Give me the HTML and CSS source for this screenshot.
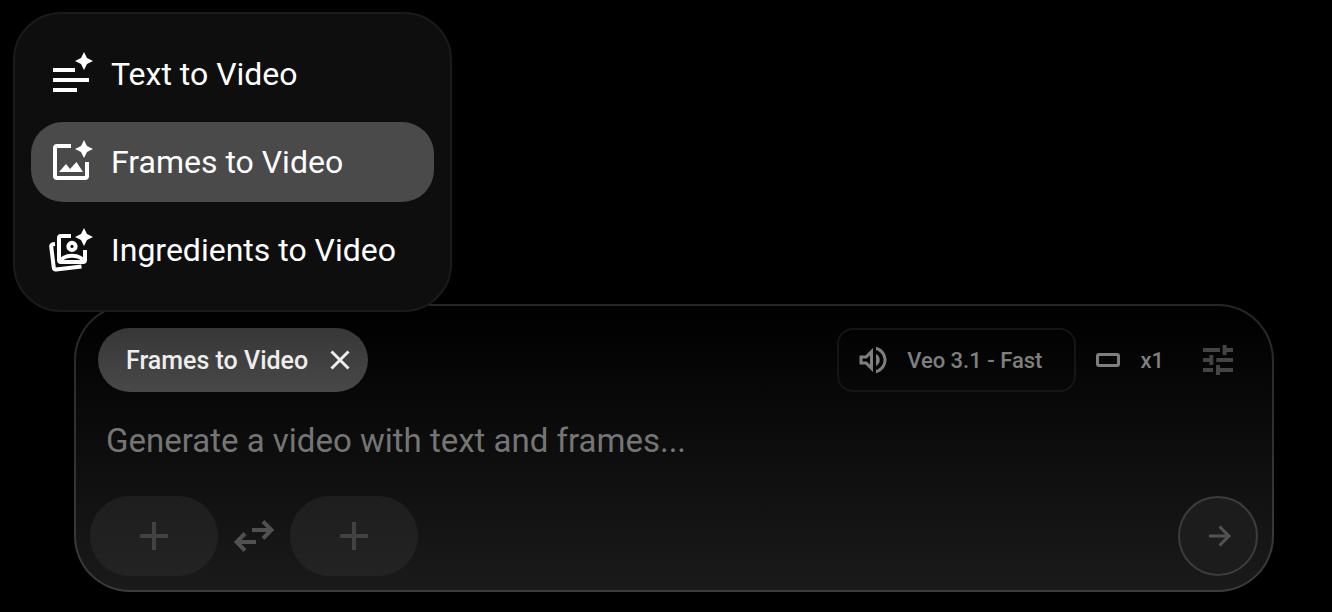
FILE: index.html
```html
<!DOCTYPE html>
<html lang="en">
<head>
  <meta charset="UTF-8">
  <meta name="viewport" content="width=device-width, initial-scale=1.0">
  <title>Frames to Video</title>
  <link rel="stylesheet" href="styles.css">
</head>
<body>
  <!-- Mode menu -->
  <nav class="mode-menu" aria-label="Mode">
    <button class="mode-item" type="button">
      <svg class="mode-icon" viewBox="0 0 48 48" aria-hidden="true">
        <path d="M6 18h22v4H6zM6 28h36v4H6zM6 38h24v4H6z"/>
        <path d="M37 2l3 6 6 3-6 3-3 6-3-6-6-3 6-3z"/>
      </svg>
      Text to Video
    </button>
    <button class="mode-item active" type="button">
      <svg class="mode-icon" viewBox="0 0 48 48" aria-hidden="true">
        <path class="line" d="M24 8H10a2 2 0 0 0-2 2v28a2 2 0 0 0 2 2h28a2 2 0 0 0 2-2V24"/>
        <path d="M12 34l7-8 4 5 6.5-7L36 34z"/>
        <path d="M37 2l3 6 6 3-6 3-3 6-3-6-6-3 6-3z"/>
      </svg>
      Frames to Video
    </button>
    <button class="mode-item" type="button">
      <svg class="mode-icon" viewBox="0 0 48 48" aria-hidden="true">
        <path class="line" d="M8 18l-2 .2a2 2 0 0 0-1.8 2.2l2.600 21.4a2 2 0 0 0 2.2 1.7L34.500 40.500"/>
        <path class="line" d="M24 10H14a2 2 0 0 0-2 2v22a2 2 0 0 0 2 2h22a2 2 0 0 0 2-2V24"/>
        <circle class="line" cx="25" cy="20.4" r="3.6"/>
        <path class="line" d="M14 33.500c6-5 16-5 22 0"/>
        <path d="M37 2l3 6 6 3-6 3-3 6-3-6-6-3 6-3z"/>
      </svg>
      Ingredients to Video
    </button>
  </nav>

  <!-- Prompt box -->
  <form class="composer">
    <div class="toolbar">
      <div class="chip">
        <span>Frames to Video</span>
        <button class="chip-close" type="button" aria-label="Close">
          <svg width="24" height="24" viewBox="0 0 24 24"><path d="M3.5 3.5l17 17M20.5 3.5l-17 17"/></svg>
        </button>
      </div>
      <div class="settings">
        <button class="model" type="button">
          <svg width="36" height="36" viewBox="0 0 24 24" aria-hidden="true">
            <path d="M3 9v6h4l5 5V4L7 9H3zm7-.17v6.34L7.83 13H5v-2h2.83L10 8.83zM16.5 12A4.5 4.5 0 0 0 14 7.97v8.05c1.48-.73 2.5-2.25 2.5-4.02zM14 3.23v2.06c2.89.86 5 3.54 5 6.71s-2.11 5.85-5 6.71v2.06c4.01-.91 7-4.49 7-8.77s-2.99-7.86-7-8.77z"/>
          </svg>
          Veo 3.1 - Fast
        </button>
        <button class="count" type="button">
          <svg width="24" height="24" viewBox="0 0 24 24" aria-hidden="true"><rect x="1.5" y="6.5" width="21" height="11" rx="1.5"/></svg>
          x1
        </button>
        <button class="tune" type="button" aria-label="Settings">
          <svg width="40" height="40" viewBox="0 0 40 40">
            <path d="M5 10h17M26.6 5v10M26.6 10H35M5 20h8M13.3 15v10M18.3 20H35M5 30h10M20 25v10M20 30h15"/>
          </svg>
        </button>
      </div>
    </div>

    <input class="prompt" type="text" aria-label="Prompt" placeholder="Generate a video with text and frames...">

    <div class="frames">
      <button class="slot" type="button" aria-label="First frame">
        <svg width="28" height="28" viewBox="0 0 28 28"><path d="M14 0v28M0 14h28"/></svg>
      </button>
      <button class="swap" type="button" aria-label="Swap frames">
        <svg width="40" height="40" viewBox="0 0 40 40"><path d="M18 14h19M29 5.5l8.5 8.5-8.5 8.5M22 26H3M11 17.5L2.5 26l8.5 8.5"/></svg>
      </button>
      <button class="slot" type="button" aria-label="Last frame">
        <svg width="28" height="28" viewBox="0 0 28 28"><path d="M14 0v28M0 14h28"/></svg>
      </button>
      <button class="send" type="submit" aria-label="Create">
        <svg width="40" height="40" viewBox="0 0 40 40"><path d="M11 20h20M21.5 10.5L31 20l-9.5 9.5"/></svg>
      </button>
    </div>
  </form>
</body>
</html>
```

FILE: styles.css
```css
* { margin: 0; padding: 0; box-sizing: border-box; }

body {
  display: flex;
  flex-direction: column;
  justify-content: flex-end;
  min-height: 100vh;
  padding: 304px 58px 20px 74px;
  background: #000;
  color: #fff;
  font-family: Roboto, "Liberation Sans", sans-serif;
}

button, input {
  border: none;
  background: none;
  color: inherit;
  font: inherit;
}
button { cursor: pointer; }
svg { display: block; flex: none; }

/* Mode menu */
.mode-menu {
  position: absolute;
  top: 12px;
  left: 13px;
  z-index: 1;
  display: flex;
  flex-direction: column;
  gap: 8px;
  padding: 20px 16px;
  border: 2px solid #1b1b1b;
  border-radius: 48px;
  background: #0e0e0e;
}
.mode-item {
  display: flex;
  align-items: center;
  gap: 16px;
  height: 80px;
  padding: 0 38px 0 16px;
  border-radius: 32px;
  font-size: 32px;
  white-space: nowrap;
}
.mode-item.active { background: #4a4a4a; }
.mode-icon { width: 48px; height: 48px; fill: #fff; }
.mode-icon .line { fill: none; stroke: #fff; stroke-width: 4; }

/* Prompt box */
.composer {
  padding: 14px;
  border: 2px solid transparent;
  border-radius: 56px;
  background:
    linear-gradient(#000, #1a1a1a) padding-box,
    linear-gradient(#272727, #3c3c3c) border-box;
}

.toolbar {
  display: flex;
  justify-content: space-between;
  padding: 8px;
  font-weight: 500;
}
.chip {
  display: flex;
  align-items: center;
  gap: 20px;
  height: 64px;
  padding: 0 16px 0 28px;
  border-radius: 32px;
  background: linear-gradient(#373737, #484848);
  color: #eee;
  font-size: 25px;
}
.chip-close svg { fill: none; stroke: #eee; stroke-width: 3; }

.settings {
  display: flex;
  align-items: center;
  color: #7f7f7f;
  font-size: 22px;
}
.model {
  display: flex;
  align-items: center;
  gap: 16px;
  height: 64px;
  padding: 0 32px 0 16px;
  border: 2px solid #151515;
  border-radius: 16px;
}
.model svg { fill: #7f7f7f; }
.count {
  display: flex;
  align-items: center;
  gap: 20px;
  height: 64px;
  padding: 0 22px 0 20px;
}
.count svg { fill: none; stroke: #7f7f7f; stroke-width: 3; }
.tune {
  display: grid;
  place-items: center;
  width: 64px;
  height: 64px;
}
.tune svg { fill: none; stroke: #444; stroke-width: 4; }

.prompt {
  display: block;
  width: 100%;
  height: 64px;
  margin: 8px 0 24px;
  padding: 0 16px;
  outline: none;
  font-size: 33px;
}
.prompt::placeholder { color: #757575; opacity: 1; }

.frames {
  display: flex;
  align-items: center;
  gap: 16px;
}
.slot {
  display: grid;
  place-items: center;
  width: 128px;
  height: 80px;
  border-radius: 40px;
  background: linear-gradient(#1e1e1e, #232323);
}
.slot svg { fill: none; stroke: #424242; stroke-width: 4; }
.swap svg { fill: none; stroke: #505050; stroke-width: 4; }
.send {
  display: grid;
  place-items: center;
  width: 80px;
  height: 80px;
  margin-left: auto;
  border: 2px solid #3c3c3c;
  border-radius: 50%;
  background: #1c1c1c;
}
.send svg { fill: none; stroke: #525252; stroke-width: 3; }
```
